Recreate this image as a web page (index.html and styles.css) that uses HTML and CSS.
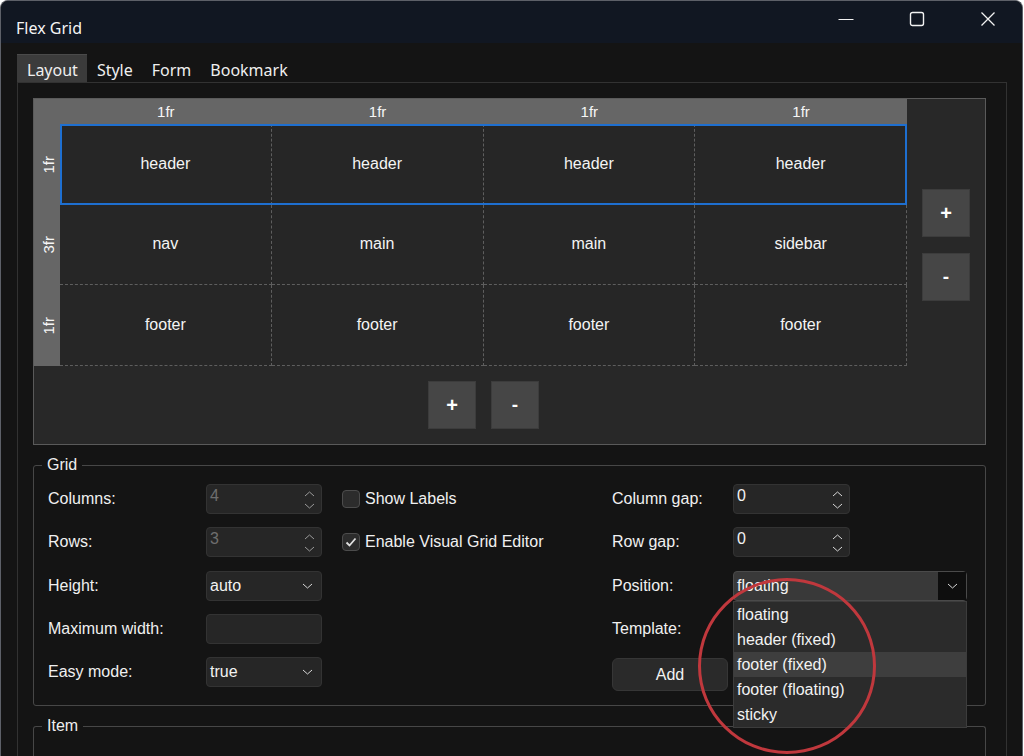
FILE: index.html
```html
<!DOCTYPE html>
<html lang="en">
<head>
<meta charset="utf-8">
<title>Flex Grid</title>
<link rel="stylesheet" href="styles.css">
</head>
<body>
<div class="window">
  <header class="titlebar">
    <span class="title">Flex Grid</span>
    <div class="controls">
      <span class="ctl"><svg width="16" height="16" viewBox="0 0 16 16"><path d="M0.5 8.5h15" stroke="#f2f2f2" stroke-width="1.2" fill="none"/></svg></span>
      <span class="ctl"><svg width="16" height="16" viewBox="0 0 16 16"><rect x="1.5" y="1.5" width="13" height="13" rx="2" stroke="#f2f2f2" stroke-width="1.4" fill="none"/></svg></span>
      <span class="ctl"><svg width="16" height="16" viewBox="0 0 16 16"><path d="M1.5 1.5l13 13M14.5 1.5l-13 13" stroke="#f2f2f2" stroke-width="1.3" fill="none"/></svg></span>
    </div>
  </header>
  <div class="client">
    <nav class="tabs">
      <span class="tab active">Layout</span>
      <span class="tab">Style</span>
      <span class="tab">Form</span>
      <span class="tab">Bookmark</span>
    </nav>
    <section class="pane">
      <div class="editor">
        <div class="col-head">
          <span></span><span>1fr</span><span>1fr</span><span>1fr</span><span>1fr</span>
        </div>
        <div class="row-head">
          <span class="vlabel">1fr</span><span class="vlabel">3fr</span><span class="vlabel">1fr</span>
        </div>
        <div class="cells">
          <div class="cell">header</div><div class="cell">header</div><div class="cell">header</div><div class="cell">header</div>
          <div class="cell">nav</div><div class="cell">main</div><div class="cell">main</div><div class="cell">sidebar</div>
          <div class="cell">footer</div><div class="cell">footer</div><div class="cell">footer</div><div class="cell">footer</div>
          <div class="selection"></div>
        </div>
        <div class="side-btns">
          <button class="sq-btn">+</button>
          <button class="sq-btn minus">-</button>
        </div>
        <div class="bottom-btns">
          <button class="sq-btn">+</button>
          <button class="sq-btn minus">-</button>
        </div>
      </div>

      <fieldset class="group">
        <legend>Grid</legend>
        <div class="form">
          <label class="lbl">Columns:</label>
          <div class="spin disabled"><span class="val">4</span><span class="arrows"><svg width="11" height="6" viewBox="0 0 11 6"><path d="M1 5l4.5-4 4.5 4" stroke="#9a9a9a" fill="none"/></svg><svg width="11" height="6" viewBox="0 0 11 6"><path d="M1 1l4.5 4 4.5-4" stroke="#9a9a9a" fill="none"/></svg></span></div>
          <span></span>
          <div class="check"><span class="box"></span><span>Show Labels</span></div>
          <label class="lbl">Column gap:</label>
          <div class="spin wide"><span class="val">0</span><span class="arrows"><svg width="11" height="6" viewBox="0 0 11 6"><path d="M1 5l4.5-4 4.5 4" stroke="#d8d8d8" fill="none"/></svg><svg width="11" height="6" viewBox="0 0 11 6"><path d="M1 1l4.5 4 4.5-4" stroke="#d8d8d8" fill="none"/></svg></span></div>

          <label class="lbl">Rows:</label>
          <div class="spin disabled"><span class="val">3</span><span class="arrows"><svg width="11" height="6" viewBox="0 0 11 6"><path d="M1 5l4.5-4 4.5 4" stroke="#9a9a9a" fill="none"/></svg><svg width="11" height="6" viewBox="0 0 11 6"><path d="M1 1l4.5 4 4.5-4" stroke="#9a9a9a" fill="none"/></svg></span></div>
          <span></span>
          <div class="check"><span class="box checked"><svg width="14" height="14" viewBox="0 0 14 14"><path d="M2.5 7.5l3 3 6-7" stroke="#e0e0e0" stroke-width="1.8" fill="none"/></svg></span><span>Enable Visual Grid Editor</span></div>
          <label class="lbl">Row gap:</label>
          <div class="spin wide"><span class="val">0</span><span class="arrows"><svg width="11" height="6" viewBox="0 0 11 6"><path d="M1 5l4.5-4 4.5 4" stroke="#d8d8d8" fill="none"/></svg><svg width="11" height="6" viewBox="0 0 11 6"><path d="M1 1l4.5 4 4.5-4" stroke="#d8d8d8" fill="none"/></svg></span></div>

          <label class="lbl">Height:</label>
          <div class="combo"><span>auto</span><svg width="11" height="6" viewBox="0 0 11 6"><path d="M1 1l4.5 4 4.5-4" stroke="#d8d8d8" fill="none"/></svg></div>
          <span></span>
          <span></span>
          <label class="lbl">Position:</label>
          <div class="combo-wrap">
            <div class="combo open"><span>floating</span><span class="drop-btn"><svg width="11" height="6" viewBox="0 0 11 6"><path d="M1 1l4.5 4 4.5-4" stroke="#d8d8d8" fill="none"/></svg></span></div>
            <ul class="dropdown">
              <li>floating</li>
              <li>header (fixed)</li>
              <li class="hover">footer (fixed)</li>
              <li>footer (floating)</li>
              <li>sticky</li>
            </ul>
          </div>

          <label class="lbl">Maximum width:</label>
          <div class="textbox"></div>
          <span></span>
          <span></span>
          <label class="lbl">Template:</label>
          <span></span>

          <label class="lbl">Easy mode:</label>
          <div class="combo"><span>true</span><svg width="11" height="6" viewBox="0 0 11 6"><path d="M1 1l4.5 4 4.5-4" stroke="#d8d8d8" fill="none"/></svg></div>
          <span></span>
          <span></span>
          <button class="add-btn">Add</button>
          <span></span>
        </div>
      </fieldset>

      <fieldset class="group item">
        <legend>Item</legend>
      </fieldset>
    </section>
  </div>
</div>
<div class="annotation"></div>
</body>
</html>
```

FILE: styles.css
```css
html, body {
  margin: 0;
  padding: 0;
}

body {
  width: 1024px;
  height: 756px;
  overflow: hidden;
  background: #ffffff;
  font-family: "Liberation Sans", Arial, sans-serif;
  font-size: 16px;
  color: #f0f0f0;
  position: relative;
}

.window {
  width: 1023px;
  height: 760px;
  box-sizing: border-box;
  border: 1px solid #5d6068;
  border-bottom: none;
  border-radius: 8px 8px 0 0;
  overflow: hidden;
  background: #141414;
}

.titlebar {
  height: 42px;
  background: #111722;
  display: flex;
  justify-content: space-between;
  align-items: flex-start;
}

.title {
  font-family: "Noto Sans", sans-serif;
  font-size: 16px;
  line-height: 20px;
  margin: 17px 0 0 15px;
  color: #f4f4f4;
}

.controls {
  display: flex;
  margin-right: -1px;
}

.ctl {
  width: 71px;
  height: 35px;
  display: flex;
  align-items: center;
  justify-content: center;
}

.client {
  padding: 11px 15px 0 16px;
}

.tabs {
  display: flex;
  height: 28px;
}

.tab {
  font-family: "Noto Sans", sans-serif;
  font-size: 16px;
  line-height: 28px;
  padding: 2px 9px 0 10px;
  color: #efefef;
}

.tab.active {
  background: #3b3b3b;
  box-shadow: inset 0 1px 0 #4a4a4a;
}

.pane {
  border: 1px solid #323232;
  border-bottom: none;
  padding: 15px 20px 0 15px;
  height: 700px;
}

.editor {
  height: 347px;
  box-sizing: border-box;
  border: 1px solid #5a5a5a;
  background: #282828;
  display: grid;
  grid-template-columns: 26px 847px 78px;
  grid-template-rows: 25px 242px 78px;
}

.col-head {
  grid-column: 1 / 3;
  grid-row: 1;
  background: #666666;
  display: grid;
  grid-template-columns: 26px repeat(4, 1fr);
  align-items: center;
  text-align: center;
  font-size: 15px;
  color: #f6f6f6;
}

.row-head {
  grid-column: 1;
  grid-row: 2;
  background: #666666;
  display: grid;
  grid-template-rows: repeat(3, 1fr);
  justify-items: center;
  align-items: center;
  font-size: 15px;
  color: #f6f6f6;
  padding-left: 2px;
}

.vlabel {
  writing-mode: vertical-rl;
  transform: rotate(180deg);
}

.cells {
  grid-column: 2;
  grid-row: 2;
  display: grid;
  grid-template-columns: repeat(4, 1fr);
  grid-template-rows: repeat(3, 1fr);
  position: relative;
}

.cell {
  background: #262626;
  border-right: 1px dashed #5e5e5e;
  border-bottom: 1px dashed #5e5e5e;
  display: flex;
  align-items: center;
  justify-content: center;
  color: #f4f4f4;
  font-size: 16px;
}

.selection {
  position: absolute;
  left: 0;
  top: 0;
  width: 100%;
  height: 81px;
  box-sizing: border-box;
  border: 2px solid #1e6fd0;
  pointer-events: none;
}

.side-btns {
  grid-column: 3;
  grid-row: 2;
  display: flex;
  flex-direction: column;
  align-items: center;
  justify-content: center;
  gap: 16px;
}

.bottom-btns {
  grid-column: 2;
  grid-row: 3;
  display: flex;
  align-items: center;
  justify-content: center;
  gap: 15px;
}

.sq-btn {
  width: 48px;
  height: 48px;
  box-sizing: border-box;
  background: #464646;
  border: 1px solid #3c3c3c;
  color: #ffffff;
  font-family: "Liberation Sans", Arial, sans-serif;
  font-weight: bold;
  font-size: 20px;
  padding: 0;
  margin: 0;
}

.sq-btn.minus {
  font-size: 19px;
}

.group {
  margin: 11px 0 0 0;
  border: 1px solid #474747;
  border-radius: 3px;
  padding: 10px 14px 18px 14px;
  min-width: 0;
}

.group legend {
  padding: 0 5px;
  margin-left: -6px;
  font-size: 16px;
  line-height: 18px;
  color: #eeeeee;
}

.group.item {
  height: 60px;
  border-bottom: none;
  border-radius: 3px 3px 0 0;
}

.form {
  display: grid;
  grid-template-columns: 158px 116px 20px 270px 121px 234px;
  grid-auto-rows: 30px;
  row-gap: 13.25px;
  align-items: center;
}

.lbl {
  color: #f0f0f0;
  font-size: 16px;
}

.spin,
.combo,
.textbox {
  height: 30px;
  box-sizing: border-box;
  background: #262626;
  border: 1px solid #333333;
  border-radius: 4px;
}

.spin {
  display: flex;
  justify-content: space-between;
  padding: 2px 6px 0 3px;
}

.spin.wide {
  width: 117px;
}

.spin .val {
  line-height: 18px;
  color: #f2f2f2;
}

.spin.disabled .val {
  color: #6e6e6e;
}

.arrows {
  display: flex;
  flex-direction: column;
  gap: 6px;
  padding-top: 4px;
}

.arrows svg {
  display: block;
}

.combo {
  display: flex;
  align-items: center;
  justify-content: space-between;
  padding: 0 8px 0 3px;
  color: #f2f2f2;
}

.combo-wrap {
  position: relative;
  height: 30px;
}

.combo.open {
  background: #393939;
  border-color: #4a4a4a;
  padding: 0;
  padding-left: 3px;
}

.drop-btn {
  width: 28px;
  height: 28px;
  background: #0e0e0e;
  display: flex;
  align-items: center;
  justify-content: center;
}

.dropdown {
  position: absolute;
  top: 30px;
  left: 0;
  width: 234px;
  box-sizing: border-box;
  margin: 0;
  padding: 0;
  list-style: none;
  background: #2b2b2b;
  border: 1px solid #3c3c3c;
  z-index: 5;
}

.dropdown li {
  height: 25px;
  line-height: 25px;
  padding-left: 3px;
  color: #f2f2f2;
}

.dropdown li.hover {
  background: #3e3e3e;
}

.check {
  display: flex;
  align-items: center;
  gap: 5px;
}

.box {
  width: 18px;
  height: 18px;
  box-sizing: border-box;
  border: 1px solid #4c4c4c;
  border-radius: 4px;
  background: #2c2c2c;
  display: flex;
  align-items: center;
  justify-content: center;
}

.add-btn {
  width: 116px;
  height: 33px;
  align-self: start;
  margin-top: 1px;
  background: #2a2a2a;
  border: 1px solid #363636;
  border-radius: 6px;
  color: #f2f2f2;
  font-family: "Liberation Sans", Arial, sans-serif;
  font-size: 16px;
}

.annotation {
  position: absolute;
  left: 698px;
  top: 578px;
  width: 178px;
  height: 176px;
  box-sizing: border-box;
  border: 3px solid #c0383d;
  border-radius: 50%;
  pointer-events: none;
  z-index: 10;
}
```
